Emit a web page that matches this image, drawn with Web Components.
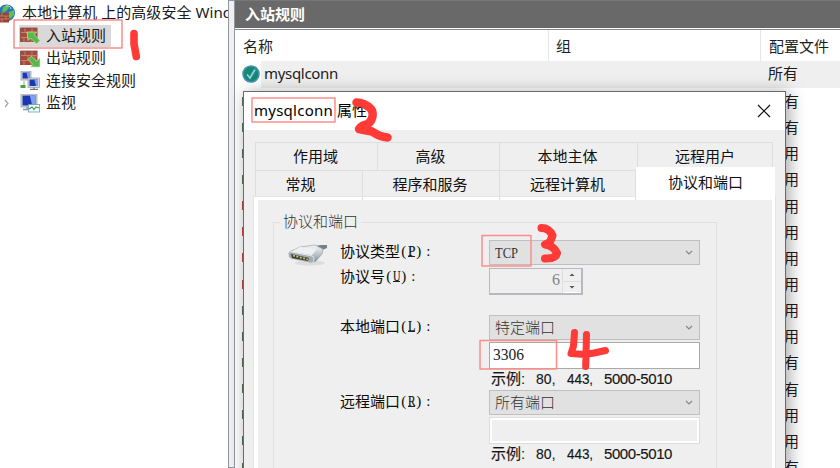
<!DOCTYPE html>
<html lang="zh-CN">
<head>
<meta charset="utf-8">
<title>入站规则</title>
<style>
html,body{margin:0;height:100%;overflow:hidden;background:#fff}
body{font:15px/22px "Noto Sans","Noto Sans CJK SC",sans-serif;color:#1c1c1c}
</style>
</head>
<body>
<firewall-app></firewall-app>
<script>
const define = (name, html, setup) => customElements.define(name, class extends HTMLElement {
  connectedCallback() {
    if (this.shadowRoot) return;
    const t = document.createElement('template');
    t.innerHTML = html;
    this.attachShadow({mode: 'open'}).append(t.content.cloneNode(true));
    if (setup) setup.call(this, this.shadowRoot);
  }
});

// Text fitted to a given width, by letter spacing or by narrowing the glyphs
define('fit-text', `<style>:host{display:inline-block;white-space:pre;flex:none}span{display:inline-block;white-space:pre;transform-origin:0 50%}</style><span><slot></slot></span>`, function (r) {
  const w = +this.getAttribute('w'), s = r.querySelector('span');
  if (!w) return;
  const now = s.getBoundingClientRect().width;
  if (this.hasAttribute('narrow')) s.style.transform = `scaleX(${w / now})`;
  else s.style.letterSpacing = (w - now) / [...this.textContent].length + 'px';
  this.style.width = w + 'px';
});

const wall = `<rect x=".5" y="2" width="17" height="14" fill="#a64a3a"/><path d="M0 6.5h18M0 11.5h18M5 2v4M12 2v4M8 7v4M15 7v4M4 12v4M11 12v4" stroke="#c98877" stroke-width=".9"/><path d="M.5 16V2h17" fill="none" stroke="#7b4a43" stroke-width=".8"/>`;
const screen = (x, y, w, h) => `<rect x="${x}" y="${y}" width="${w}" height="${h}" fill="#d4d8df" stroke="#8e99a8" stroke-width=".7"/><rect x="${x+1.5}" y="${y+1.5}" width="${w-3}" height="${h-3}" fill="#1c38b0"/><path d="M${x+w*.55} ${y+1.5}L${x+w-1.5} ${y+1.5}V${y+h-1.5}H${x+w*.7}z" fill="#7f9ff0"/>`;
const icons = {
  root: `<circle cx="9.5" cy="9" r="8.500" fill="#2379b6"/><path d="M6 3q5-3 6 1l-3 3-4 2zM12 8l5-2v5l-4 4-2-4z" fill="#67bb4f"/><path d="M9 2q4-1 5 3" stroke="#bfe8f5" fill="none"/><path d="M0 9h12v9.500H0z" fill="#984237"/><path d="M0 12h12M0 15h12M5 9v3M9 12v3M5 15v3" stroke="#c98877" stroke-width=".8"/>`,
  inbound: wall + `<path d="M7 6h9.500l-2.500 2.500 6 6-3.500 3.500-6-6L8 14.500z" fill="#58b947" stroke="#c4eab4" stroke-width=".7"/>`,
  outbound: wall + `<path d="M20 18h-9.500l2.500-2.500-5-5L11.500 7l5 5L20 9z" fill="#58b947" stroke="#c4eab4" stroke-width=".7"/>`,
  link: screen(1, 0, 10, 9) + screen(8, 7, 11.5, 9.5) + `<path d="M4 10v4" stroke="#8fae94"/><path d="M.5 15.500h5" stroke="#3fa43a" stroke-width="3"/><path d="M10 18.300h8M14 16.500v2" stroke="#777" stroke-width="1.200"/>`,
  monitor: screen(1, 0, 16, 13) + `<path d="M3 15.500h7M7 13v2" stroke="#9299a3" stroke-width="1.500"/><rect x="8.500" y="10.500" width="11" height="7.500" fill="#f3fbff" stroke="#6798c3" stroke-width=".8"/><path d="M9 15l3-2 2 2.500 2-2.500 3 1" stroke="#39a339" fill="none" stroke-width="1.200"/>`,
  check: `<circle cx="9" cy="9" r="8" fill="#158a70" stroke="#4590b1" stroke-width="1.600"/><path d="M5 9.500l3 3.500 5-8.500" fill="none" stroke="#8ed0f5" stroke-width="1.700"/>`
};
define('ui-icon', `<style>:host{display:block;flex:none}svg{display:block}</style><svg width="20" height="19" viewBox="0 0 20 19"></svg>`, function (r) {
  r.querySelector('svg').innerHTML = icons[this.getAttribute('name')];
});

define('tree-item', `<style>
:host{display:flex;align-items:center;height:22.5px;padding-left:20px}
:host([root]){padding-left:0;margin-left:-3px}
:host([root]) .t{margin-left:1px}
.t{margin-left:2px;padding:0 5px 0 4px;height:22px;line-height:21px;white-space:pre}
:host([selected]) .b{background:#d9d9d9}.b{display:flex;align-items:center;margin-left:-1px;padding-left:1px}
:host([arrow]){padding-left:0}.a{display:none;width:20px;height:9px}:host([arrow]) .a{display:block}
</style><svg class="a" viewBox="0 0 20 9"><path d="M5 1l3 3.500-3 3.500" fill="none" stroke="#a3a3a3" stroke-width="1.200"/></svg><div class="b"><ui-icon></ui-icon><div class="t"><slot></slot></div></div>`, function (r) {
  const i = document.createElement('ui-icon');
  i.setAttribute('name', this.getAttribute('icon'));
  r.querySelector('ui-icon').replaceWith(i);
});

define('rule-tree', `<style>:host{display:block;overflow:hidden;width:228px;padding-top:2px;box-sizing:border-box;background:#fff}</style>
<tree-item root icon="root"><fit-text w="210">本地计算机 上的高级安全 Wind</fit-text></tree-item>
<tree-item selected icon="inbound">入站规则</tree-item>
<tree-item icon="outbound">出站规则</tree-item>
<tree-item icon="link">连接安全规则</tree-item>
<tree-item arrow icon="monitor">监视</tree-item>`);

define('rule-list', `<style>
:host{display:block;overflow:hidden;background:#fff}
.bar{height:28px;box-sizing:border-box;background:#696969;border-top:1px solid #777;color:#fff;font-weight:600;line-height:26px;padding-left:10px}
.rim{height:1px;border-bottom:1px solid #828790}
.cols{display:grid;grid-template-columns:314px 212px 1fr;height:31px;line-height:33px}
.cols div{padding-left:8px;border-right:1px solid #e5e5e5}.cols div:first-child{padding-left:8px}.cols div:nth-child(2){padding-left:7px}.cols div:last-child{border:0}
.sel{display:grid;grid-template-columns:26px 1fr 72px;height:27px;align-items:center}
.sel ui-icon{margin:0 0 0 7px}.name,.p{background:#efefef;height:27px;line-height:25px}.name{padding-left:3px}
.r{display:flex;height:26.150px;align-items:center;justify-content:space-between;padding:0 41px 0 7px;line-height:24px}
.r i{width:10px;height:9px;background:#56705e}.r i.x{background:#b94848}
</style>
<div class="bar">入站规则</div><div class="rim"></div>
<div class="cols"><div>名称</div><div>组</div><div>配置文件</div></div>
<div class="sel"><ui-icon name="check"></ui-icon><div class="name"><fit-text w="74">mysqlconn</fit-text></div><div class="p">所有</div></div><div id="rows"></div>`, function (r) {
  r.querySelector('#rows').innerHTML = [...'有有用用用用用用用用有有用用有'].map((c, i) => `<div class="r"><i class="${i > 3 && i < 8 ? 'x' : ''}"></i><span>${c}</span></div>`).join('');
});

define('tab-strip', `<style>
:host{display:block;width:519px;height:55px;box-sizing:border-box;color:#111}
.row{display:grid;height:28px;box-sizing:border-box;border-top:1px solid #dedede;border-left:1px solid #dedede;line-height:27px;text-align:center}
.one{grid-template-columns:122px 122px 138px 135px;width:518px}.two{grid-template-columns:107px 137px 136px 139px;height:27px}
.row div{border-right:1px solid #dedede}
.row .on{background:#fff;height:33px;margin-top:-4px;line-height:30px;border:0;position:relative}
</style><div class="row one"><div style="text-indent:-2px">作用域</div><div style="text-indent:-16px">高级</div><div style="text-indent:-2px">本地主体</div><div>远程用户</div></div>
<div class="row two"><div style="text-indent:-17px">常规</div><div style="text-indent:-2px">程序和服务</div><div>远程计算机</div><div class="on">协议和端口</div></div>`);

define('field-label', `<style>:host{display:flex;width:149px;line-height:23px;color:#0c0c0c}.k{font-family:"Liberation Serif","Noto Sans CJK SC",serif;display:flex}.k span{width:7.500px;text-align:center;flex:none}.k .u{border-bottom:1px solid #222;height:17px;line-height:23px;box-sizing:border-box;-webkit-text-stroke:.2px #111}.k .u fit-text{width:7.5px}.k span:last-child{padding-left:2px}</style><slot></slot><div class="k"><span>(</span><span class="u"></span><span>)</span><span>:</span></div>`, function (r) {
  r.querySelector('.u').innerHTML = `<fit-text w="7.5" narrow>${this.getAttribute('key')}</fit-text>`;
});

define('combo-box', `<style>:host{display:flex;box-sizing:border-box;width:211px;height:25px;align-items:center;justify-content:space-between;background:#e1e1e1;border:1px solid #bfbfbf;padding:0 5px 0 5px;font-family:"Liberation Serif","Noto Sans CJK SC",serif;font-weight:300;color:#333}</style><slot></slot><svg width="10" height="8"><path d="M2 2l3 3 3-3" fill="none" stroke="#858585" stroke-width="1.200"/></svg>`);

define('number-spin', `<style>:host{display:flex;box-sizing:border-box;width:94px;height:27px;border:1px solid #b8b8c0;border-width:1px 2px 2px 1px;justify-content:flex-end;font:16px/21px "Liberation Serif",serif;color:#838383}.s{width:18px;margin-left:2px;border-left:1px solid #ddd;display:grid;grid-template-rows:1fr 1fr}.s svg{width:18px;height:12px;display:block}.s svg+svg{border-top:1px solid #ddd;border-bottom:1px solid #fff;height:10px}</style><slot></slot><div class="s"><svg viewBox="0 0 18 12"><path d="M6.500 7h5L9 4.500z" fill="#555"/></svg><svg viewBox="0 0 18 10"><path d="M6.500 4h5L9 6.500z" fill="#555"/></svg></div>`);

define('text-box', `<style>:host{display:block;box-sizing:border-box;width:211px;height:27px;background:#fff;border:1px solid #aaa;padding-left:3px;font:16px/23px "Liberation Serif",serif;color:#222}:host([off]){background:#efefef;border-color:#ddd;box-shadow:inset 0 0 0 2px #fff}</style><slot></slot>`);

define('port-hint', `<style>:host{display:flex;height:21px;line-height:19px;padding-left:2px;color:#151515;font-family:"Liberation Sans","Noto Sans CJK SC",sans-serif}.c{width:15px}fit-text{-webkit-text-stroke:.15px #151515}</style><fit-text w="30">示例</fit-text><span class="c">:</span><fit-text w="15.5" narrow>80</fit-text><span class="c">,</span><fit-text w="22.500" narrow>443</fit-text><span class="c">,</span><fit-text w="68">5000-5010</fit-text>`);

define('group-box', `<style>
:host{display:block;box-sizing:border-box;width:444px;height:300px;border:1px solid #e0e0e0;padding:17px 0 0 13px}
.legend{float:left;height:20px;margin:-29px -90px 8px -7px;padding:0 3px;background:#efefef;line-height:20px;font-weight:300;color:#333}
.g{display:grid;grid-template-columns:53px 149px 211px;grid-template-rows:28px 47px 27px 27px 21px 27px 27px 21px;align-items:start}
</style><div class="legend"><slot name="legend"></slot></div><div class="g"><slot></slot></div>`);

define('plug-icon', `<style>:host{display:block}svg{display:block;margin-top:3px}</style><svg width="42" height="24" viewBox="0 0 42 24"><defs><linearGradient id="m" x2="0" y2="1"><stop stop-color="#f4f6f7"/><stop offset=".55" stop-color="#b9c2c9"/><stop offset="1" stop-color="#73818b"/></linearGradient></defs><ellipse cx="23" cy="20" rx="15" ry="2.500" fill="#ddd"/><path d="M28 3l6-1 6 0v3l-7 3z" fill="#72818d"/><path d="M2 9L13 4l15-2 8 4-1 5-6 7-5 2-21-5z" fill="url(#m)" stroke="#8d989f" stroke-width=".6"/><path d="M13 4l17 2-5 6L4 9z" fill="#eef1f3"/><path d="M1 10q1-2 4-1l20 4q3 1 2 4-1 4-5 3L4 16q-3-1-3-6z" fill="#a5adb4" stroke="#e3e7ea"/><path d="M4 11l18 4-1 3-16-3z" fill="#383b35"/><path d="M6 12.500l15 4" stroke="#cfca62" stroke-width="1.800" stroke-dasharray="2 1.500"/></svg>`);

define('props-dialog', `<style>
:host{display:block;box-sizing:border-box;background:#efefef;border:1px solid #6a6a6a;box-shadow:3px 2px 16px rgba(0,0,0,.36);overflow:hidden}
.title{display:flex;align-items:center;height:38px;box-sizing:border-box;background:#fff;padding:0 14px 2px 10px;color:#000;justify-content:space-between}
.title svg{margin-top:2px}
.tabs{padding:12px 0 0 11px}
.panel{box-sizing:border-box;width:521px;height:300px;margin-left:10px;border:4px solid #fff;border-width:3px 3px 0 4px;outline:1px solid #e5e5e5;padding:22px 0 0 15px}
tab-strip{position:relative;z-index:1}
.w{grid-column:3}
.up{margin-top:-3px}
</style>
<div class="title"><span><fit-text w="79">mysqlconn</fit-text> <span>属性</span></span><svg width="14" height="14"><path d="M1 1l12 12M13 1L1 13" stroke="#111" stroke-width="1.200"/></svg></div>
<div class="tabs"><tab-strip></tab-strip></div>
<div class="panel"><group-box><fit-text slot="legend" w="75">协议和端口</fit-text>
<plug-icon></plug-icon><field-label key="P">协议类型</field-label><combo-box><fit-text w="23" narrow>TCP</fit-text></combo-box>
<span></span><field-label class="up" key="U">协议号</field-label><number-spin>6</number-spin>
<span></span><field-label key="L">本地端口</field-label><combo-box>特定端口</combo-box>
<text-box class="w"><fit-text w="31" narrow>3306</fit-text></text-box><port-hint class="w"></port-hint>
<span></span><field-label key="R">远程端口</field-label><combo-box>所有端口</combo-box>
<text-box off class="w"></text-box><port-hint class="w"></port-hint>
</group-box></div>`);

define('ink-marks', `<style>:host{display:block;position:absolute;inset:0}svg{display:block}</style><svg width="840" height="468" fill="none" stroke-linecap="round" stroke-linejoin="round"><g stroke="#fb8d8d" stroke-width="1.500"><path d="M14 20h108v28H14zM252 98h83v24h-83zM482 235.500h49v30.500h-49zM480 340.500h76.500V369H480z"/></g><g stroke="#ff3a37" stroke-width="7.600"><path d="M134 33.500V44l2.300 12.500"/><path stroke-width="8.500" d="M356.500 102.500C363 102.500 368 106 371 109C374 113 373 120 368 124Q362 125 359 129L372 131.500Q380 137 387.500 137.500"/><path stroke-width="8" d="M541.500 228Q549 228 552.500 235.500L550 242L545 244.500Q554 246 557 253Q556 259 545 258.500"/><path stroke-width="7" d="M574.500 332.500l-1 13.500-2.500 7.500 14 1 9-1.500 11.500-2.500M586.500 334.500l-.8 32"/></g></svg>`);

define('firewall-app', `<style>
:host{display:grid;position:relative;grid-template-columns:228px 7px 605px;height:468px;overflow:hidden}
.split{background:#f0f0f0;border:1px solid #9196a0;box-sizing:border-box}
props-dialog{position:absolute;left:243px;top:91px;width:543px;height:390px}
</style><rule-tree></rule-tree><div class="split"></div><rule-list></rule-list><props-dialog></props-dialog><ink-marks></ink-marks>`);
</script>
</body>
</html>
